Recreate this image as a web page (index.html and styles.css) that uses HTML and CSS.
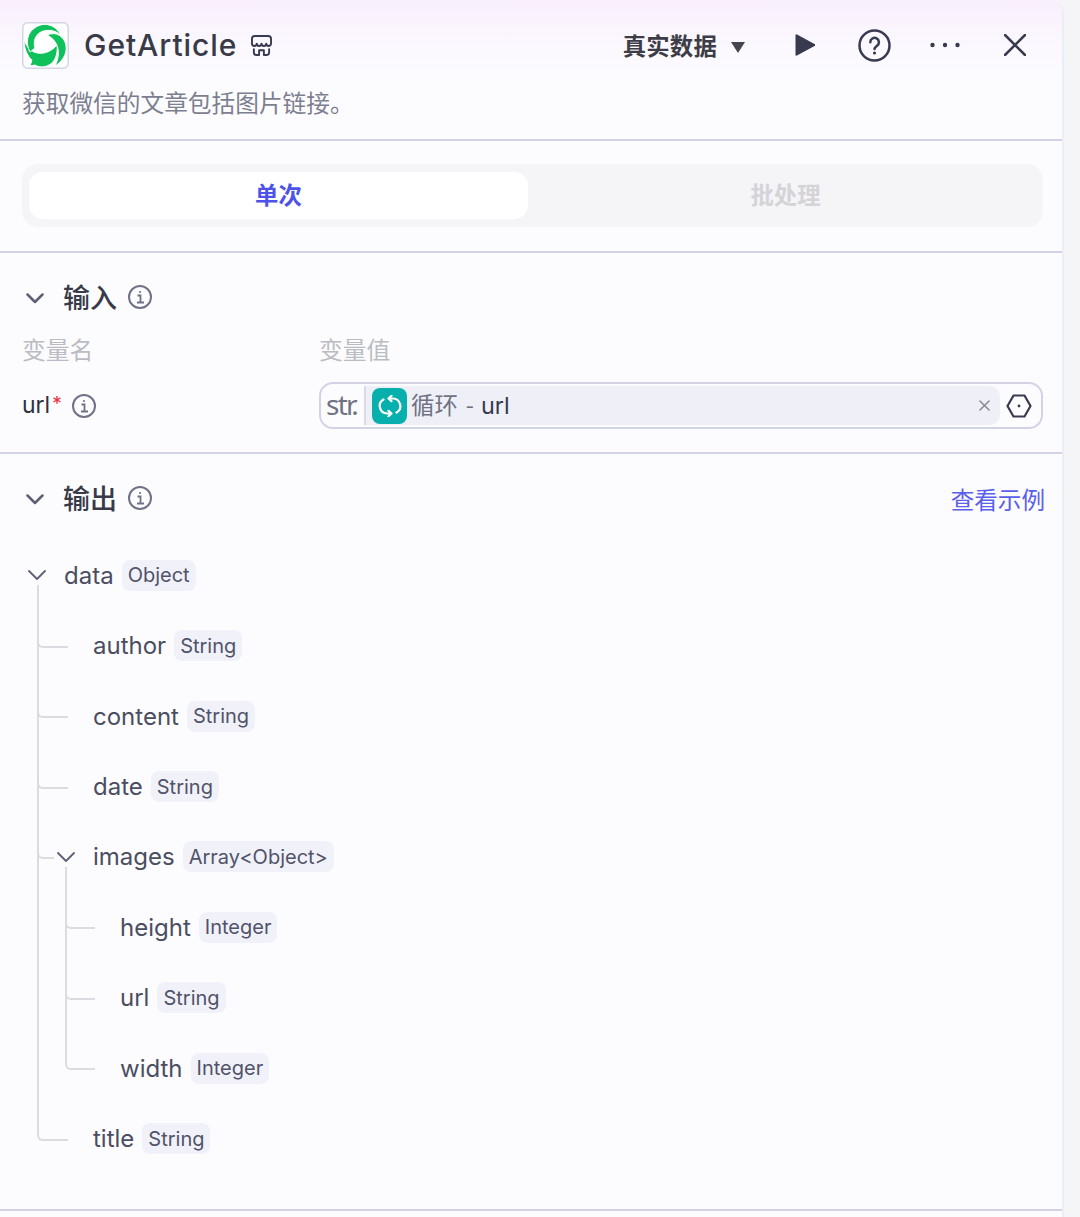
FILE: index.html
```html
<!DOCTYPE html>
<html lang="zh">
<head>
<meta charset="utf-8">
<title>GetArticle</title>
<link rel="stylesheet" href="styles.css">
</head>
<body>
<main class="panel">
  <header class="header">
    <div class="header-top">
      <svg class="logo" viewBox="0 0 47 47">
        <rect x="0.75" y="0.75" width="45.5" height="45.5" rx="5" fill="#fff" stroke="#d3d6e4" stroke-width="1.5"/>
        <g fill="#0fc15a" stroke="#fff" stroke-width="1">
          <path d="M2 18C4 23 7 28 12 30C19 33 28 31 35 23C36 32 33 40 27 43C22 46 16 45 13 43L8 44L10 38C5 34 2 26 2 18Z"/>
          <path d="M25 13C32 10 38 12 42 18C47 27 43 38 33 44C36 38 37 32 36 27C35 21 31 16 25 13Z"/>
          <path d="M8 30C3 21 5 10 14 5C22 0 33 2 39 13C33 8 25 7 19 10C13 13 11 20 13 26Z"/>
        </g>
      </svg>
      <h1 class="title">GetArticle</h1>
      <svg class="store" viewBox="0 0 22 22" fill="none" stroke="#383a50" stroke-width="2" stroke-linejoin="round" stroke-linecap="round">
        <path d="M4 1h14a3 3 0 0 1 3 3v5a2.500 2.500 0 0 1-5 0 2.500 2.500 0 0 1-5 0 2.500 2.500 0 0 1-5 0 2.500 2.500 0 0 1-5 0V4a3 3 0 0 1 3-3z"/>
        <path d="M3 15v3a3 3 0 0 0 3 3h2.500v-5h5v5H16a3 3 0 0 0 3-3v-3"/>
      </svg>
      <div class="actions">
        <span class="mode">真实数据</span>
        <svg class="caret" viewBox="0 0 14 11"><path d="M0 0h14L7 11z" fill="#45454f"/></svg>
        <svg class="play" viewBox="0 0 20 22"><path d="M0.500 1.500a1 1 0 0 1 1.500-1L19.500 10a1 1 0 0 1 0 2L2 21.500a1 1 0 0 1-1.500-1z" fill="#383a50"/></svg>
        <svg class="help" viewBox="0 0 33 33" fill="none" stroke="#383a50" stroke-width="2.500" stroke-linecap="round">
          <circle cx="16.500" cy="16.500" r="15"/>
          <path d="M12.300 13.200a4.300 4.300 0 1 1 6.800 3.500c-1.600 1.200-2.600 1.800-2.600 3.400"/>
          <circle cx="16.500" cy="24" r="0.700" stroke-width="1.800" fill="#383a50"/>
        </svg>
        <svg class="more" viewBox="0 0 30 6" fill="#383a50"><circle cx="2.500" cy="3" r="2.200"/><circle cx="15" cy="3" r="2.200"/><circle cx="27.500" cy="3" r="2.200"/></svg>
        <svg class="close" viewBox="0 0 22 22" stroke="#383a50" stroke-width="2.500" stroke-linecap="round"><path d="M1 1l20 20M21 1L1 21"/></svg>
      </div>
    </div>
    <p class="desc">获取微信的文章包括图片链接。</p>
  </header>

  <section class="tabs-section">
    <div class="tabs">
      <div class="tab tab-active">单次</div>
      <div class="tab tab-off">批处理</div>
    </div>
  </section>

  <section class="input-section">
    <div class="sec-head">
      <svg class="sec-chev" viewBox="0 0 18 11" fill="none" stroke="#5d6074" stroke-width="2.500" stroke-linecap="round" stroke-linejoin="round"><path d="M1.500 1.500L9 9l7.500-7.500"/></svg>
      <h2 class="sec-title">输入</h2>
      <svg class="info" viewBox="0 0 24 24" fill="none" stroke="#6f7287" stroke-width="2"><circle cx="12" cy="12" r="11"/><circle cx="12" cy="7" r="1.100" fill="#6f7287" stroke="none"/><path d="M9.500 10.500H12.500V17.500M9 17.500h7" stroke-width="1.800"/></svg>
    </div>
    <div class="var-labels">
      <span class="var-name">变量名</span>
      <span>变量值</span>
    </div>
    <div class="var-row">
      <div class="var-name var-key">
        <span>url</span><span class="req">*</span>
        <svg class="info" viewBox="0 0 24 24" fill="none" stroke="#6f7287" stroke-width="2"><circle cx="12" cy="12" r="11"/><circle cx="12" cy="7" r="1.100" fill="#6f7287" stroke="none"/><path d="M9.500 10.500H12.500V17.500M9 17.500h7" stroke-width="1.800"/></svg>
      </div>
      <div class="field">
        <span class="field-type">str.</span>
        <div class="chip">
          <span class="chip-icon">
            <svg viewBox="0 0 24 22" fill="none" stroke="#fff" stroke-width="2.200" stroke-linecap="round" stroke-linejoin="round">
              <path d="M10.500 3.500H15a7.500 7.500 0 0 1 3.500 14M13.500 0.800L10.500 3.500l3 2.700"/>
              <path d="M13.500 18.500H9a7.500 7.500 0 0 1-3.500-14M10.500 15.800l3 2.700-3 2.700"/>
            </svg>
          </span>
          <span class="chip-text"><span class="chip-src">循环<span class="chip-dash">-</span></span><span class="chip-var">url</span></span>
          <svg class="chip-x" viewBox="0 0 12 12" stroke="#85868f" stroke-width="1.600" stroke-linecap="round"><path d="M1 1l10 10M11 1L1 11"/></svg>
        </div>
        <svg class="hex" viewBox="0 0 26 24" fill="none" stroke="#383a50" stroke-width="2.200" stroke-linejoin="round"><path d="M7.500 1.500h11L24.500 12l-6 10.500h-11L1.500 12z"/><circle cx="13" cy="12" r="1.400" fill="#383a50" stroke="none"/></svg>
      </div>
    </div>
  </section>

  <section class="output-section">
    <div class="sec-head">
      <svg class="sec-chev" viewBox="0 0 18 11" fill="none" stroke="#5d6074" stroke-width="2.500" stroke-linecap="round" stroke-linejoin="round"><path d="M1.500 1.500L9 9l7.500-7.500"/></svg>
      <h2 class="sec-title">输出</h2>
      <svg class="info" viewBox="0 0 24 24" fill="none" stroke="#6f7287" stroke-width="2"><circle cx="12" cy="12" r="11"/><circle cx="12" cy="7" r="1.100" fill="#6f7287" stroke="none"/><path d="M9.500 10.500H12.500V17.500M9 17.500h7" stroke-width="1.800"/></svg>
      <a class="example">查看示例</a>
    </div>
    <div class="tree">
      <div class="row root">
        <svg class="tree-chev" viewBox="0 0 18 10" fill="none" stroke="#5d6074" stroke-width="1.800" stroke-linecap="round" stroke-linejoin="round"><path d="M1 1l8 8 8-8"/></svg>
        <span class="key">data</span><span class="tag">Object</span>
      </div>
      <div class="level level-1">
        <div class="row"><span class="key">author</span><span class="tag">String</span></div>
        <div class="row"><span class="key">content</span><span class="tag">String</span></div>
        <div class="row"><span class="key">date</span><span class="tag">String</span></div>
        <div class="row has-chev">
          <svg class="tree-chev" viewBox="0 0 18 10" fill="none" stroke="#5d6074" stroke-width="1.800" stroke-linecap="round" stroke-linejoin="round"><path d="M1 1l8 8 8-8"/></svg>
          <span class="key">images</span><span class="tag">Array&lt;Object&gt;</span>
        </div>
        <div class="level level-2">
          <div class="row"><span class="key">height</span><span class="tag">Integer</span></div>
          <div class="row"><span class="key">url</span><span class="tag">String</span></div>
          <div class="row"><span class="key">width</span><span class="tag">Integer</span></div>
        </div>
        <div class="row"><span class="key">title</span><span class="tag">String</span></div>
      </div>
    </div>
  </section>
</main>
</body>
</html>
```
FILE: styles.css
```css
* { box-sizing: border-box; }
html, body { margin: 0; padding: 0; }
body {
  width: 1080px;
  height: 1217px;
  overflow: hidden;
  background: #f5f5f8;
  font-family: Inter, "Noto Sans CJK SC", sans-serif;
  color: #383a50;
}
.panel {
  width: 1064px;
  height: 1217px;
  background: #fcfcff;
  border-right: 2px solid #eceef6;
  border-top-right-radius: 14px;
  overflow: hidden;
}
.header {
  height: 141px;
  padding: 22px 0 0 22px;
  background: linear-gradient(180deg, #f9effd 0, #fbf7fe 40px, #fcfcff 80px);
  border-bottom: 2px solid #d2d4e6;
}
.header-top { display: flex; align-items: center; height: 46px; }
.logo { width: 47px; height: 47px; flex: none; }
.title {
  margin: 0 0 0 15px;
  font-size: 30px;
  font-weight: 500;
  letter-spacing: 0.95px;
  color: #383a48;
}
.store { width: 21px; height: 21px; margin-left: 14px; }
.actions { display: flex; align-items: center; margin-left: auto; padding-right: 36px; }
.mode {
  font-family: "Noto Sans CJK SC", sans-serif;
  font-size: 23.4px;
  font-weight: 700;
  letter-spacing: 0.2px;
  color: #3d3d47;
}
.caret { width: 14px; height: 11px; margin-left: 14px; margin-top: 4px; }
.play { width: 20px; height: 22px; margin-left: 50px; }
.help { width: 33px; height: 33px; margin-left: 43px; }
.more { width: 30px; height: 6px; margin-left: 39px; }
.close { width: 22px; height: 22px; margin-left: 44px; }
.desc {
  margin: 19px 0 0;
  font-family: "Noto Sans CJK SC", sans-serif;
  font-size: 23.7px;
  line-height: 30px;
  color: #7c7f90;
}

.tabs-section {
  height: 112px;
  padding: 23px 19px 0 22px;
  border-bottom: 2px solid #d2d4e6;
}
.tabs {
  display: flex;
  height: 63px;
  padding: 8px 0 8px 7px;
  background: #f5f5f7;
  border-radius: 16px;
}
.tab {
  display: flex;
  align-items: center;
  justify-content: center;
  padding-bottom: 4px;
  font-family: "Noto Sans CJK SC", sans-serif;
  font-size: 23.4px;
  font-weight: 700;
  border-radius: 14px;
}
.tab-active { width: 499px; flex: none; background: #fff; color: #4d53e8; }
.tab-off { flex: 1; color: #d4d4d7; }

.input-section {
  height: 201px;
  padding: 26px 19px 0 22px;
  border-bottom: 2px solid #d2d4e6;
}
.sec-head { display: flex; align-items: center; height: 36px; }
.sec-chev { width: 18px; height: 11px; margin-left: 4px; margin-top: 2px; }
.sec-title {
  margin: 0 0 0 19px;
  font-family: "Noto Sans CJK SC", sans-serif;
  font-size: 27px;
  line-height: 36px;
  font-weight: 500;
  color: #383a48;
}
.info { width: 24px; height: 24px; margin-left: 11px; }
.var-labels {
  display: flex;
  margin-top: 18px;
  font-family: "Noto Sans CJK SC", sans-serif;
  font-size: 23.8px;
  line-height: 32px;
  color: #bbbcc2;
}
.var-name { width: 297px; flex: none; }
.var-row { display: flex; align-items: center; margin-top: 17px; }
.var-key { display: flex; align-items: center; font-size: 23px; color: #2f3140; padding-bottom: 2px; }
.var-key .info { margin-left: 10px; margin-top: 2px; }
.req { color: #f32b40; font-size: 19px; align-self: flex-start; margin-left: 2px; line-height: 20px; margin-top: 3px; }
.field {
  flex: 1;
  display: flex;
  align-items: center;
  height: 47px;
  padding: 2px 0;
  border: 2px solid #d2d4e6;
  border-radius: 14px;
}
.field-type {
  width: 45px;
  height: 100%;
  flex: none;
  display: flex;
  align-items: center;
  justify-content: center;
  padding: 0 2px 3px 0;
  font-family: "Noto Sans", sans-serif;
  font-size: 28px;
  letter-spacing: -1.800px;
  color: #6f7283;
  border-right: 2px solid #d9dbe8;
}
.chip {
  flex: 1;
  display: flex;
  align-items: center;
  height: 39px;
  padding: 0 10px 0 6px;
  background: #eff0f7;
  border-radius: 0 10px 10px 0;
}
.chip-icon {
  width: 35px;
  height: 36px;
  flex: none;
  display: flex;
  align-items: center;
  justify-content: center;
  background: #08b0ad;
  border-radius: 8px;
}
.chip-icon svg { width: 24px; height: 22px; }
.chip-text {
  flex: 1;
  margin-left: 4px;
  padding-bottom: 3px;
  font-family: "Noto Sans CJK SC", sans-serif;
  font-size: 23.4px;
}
.chip-src { color: #6f7283; }
.chip-dash { margin: 0 7px 0 8px; }
.chip-var { color: #383a50; font-family: Inter, sans-serif; }
.chip-x { width: 11px; height: 11px; flex: none; }
.hex { width: 26px; height: 24px; margin: 0 9px 0 6px; flex: none; }

.output-section {
  height: 757px;
  padding: 26px 17px 0 22px;
  border-bottom: 2px solid #d2d4e6;
}
.example {
  margin-left: auto;
  font-family: "Noto Sans CJK SC", sans-serif;
  font-size: 23.6px;
  color: #5a60ea;
  padding-top: 2px;
}
.tree { margin-top: 24px; }
.row {
  position: relative;
  display: flex;
  align-items: center;
  height: 70.44px;
}
.root { padding-left: 42px; }
.level { position: relative; }
.level::before {
  content: "";
  position: absolute;
  left: 0;
  top: -25px;
  bottom: 41px;
  width: 2px;
  background: #dcdce0;
}
.level-1 { margin-left: 15px; padding-left: 56px; }
.level-2 { margin-left: -28px; padding-left: 55px; }
.level > .row::before {
  content: "";
  position: absolute;
  top: calc(50% - 7px);
  left: -56px;
  width: 29px;
  height: 7px;
  border-left: 2px solid #dcdce0;
  border-bottom: 2px solid #dcdce0;
  border-bottom-left-radius: 6px;
}
.level-2 > .row::before { left: -55px; width: 28px; }
.level > .has-chev::before { width: 15px; }
.key { font-size: 24px; color: #4b4e60; }
.tag {
  display: inline-flex;
  align-items: center;
  height: 31px;
  margin-left: 8px;
  padding: 0 6px;
  font-size: 20px;
  color: #50536a;
  background: #f1f2f9;
  border-radius: 8px;
}
.tree-chev {
  position: absolute;
  width: 18px;
  height: 10px;
  top: 30px;
  left: -36px;
}
.root .tree-chev { left: 6px; }
```
